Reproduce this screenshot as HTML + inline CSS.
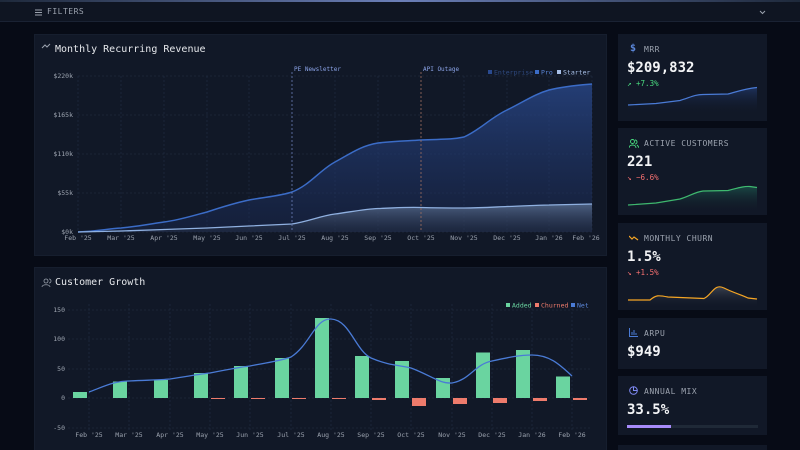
<!DOCTYPE html>
<html><head><meta charset="utf-8"><style>
*{margin:0;padding:0;box-sizing:border-box}
html,body{width:800px;height:450px;overflow:hidden}
body{background:#070b16;font-family:"DejaVu Sans Mono","Liberation Mono",monospace;color:#e5e7eb;position:relative}
.top{position:absolute;left:0;top:0;width:800px;height:2px;background:linear-gradient(90deg,#1e293b,#6b7fb8 50%,#1e293b)}
.bar{position:absolute;left:0;top:2px;width:800px;height:20px;background:#0f1522;border-bottom:1px solid #1a2233}
.bar span{position:absolute;left:47px;top:5px;font-size:8px;color:#9ca3af;letter-spacing:.5px}
.panel{position:absolute;background:#111827;border:1px solid #161e2e}
.card{position:absolute;left:618px;width:149px;background:#111827;overflow:hidden}
.lbl{position:absolute;left:26px;top:11px;font-size:8px;color:#9ca3af;letter-spacing:.5px}
.val{position:absolute;left:9px;font-size:14px;font-weight:bold;color:#f3f4f6}
.chg{position:absolute;left:9px;font-size:7.5px}
svg text{font-family:"DejaVu Sans Mono","Liberation Mono",monospace}
</style></head><body>
<div class="top"></div>
<div class="bar"><svg style="position:absolute;left:35px;top:7px" width="7" height="7"><path d="M0 1h7M0 3.5h7M0 6h7" stroke="#9ca3af" stroke-width="1"/></svg><span>FILTERS</span>
<svg style="position:absolute;left:759px;top:8px" width="7" height="5"><path d="M1 1l2.5 2.5L6 1" stroke="#9ca3af" fill="none"/></svg></div>

<div class="panel" style="left:34px;top:34px;width:573px;height:222px"></div>
<div class="panel" style="left:34px;top:267px;width:573px;height:190px"></div>

<svg style="position:absolute;left:0;top:0" width="800" height="450">
<defs>
<linearGradient id="g1" x1="0" y1="0" x2="0" y2="1"><stop offset="0" stop-color="#2a4a8f" stop-opacity=".75"/><stop offset="1" stop-color="#1a2a55" stop-opacity=".4"/></linearGradient>
<linearGradient id="g2" x1="0" y1="0" x2="0" y2="1"><stop offset="0" stop-color="#5a6f92" stop-opacity=".8"/><stop offset="1" stop-color="#2b3548" stop-opacity=".3"/></linearGradient>
</defs>
<path d="M42 48l3-3 2 2 3-3" stroke="#9ca3af" fill="none" stroke-width="1"/>
<text x="55" y="52" font-size="10" fill="#e5e7eb">Monthly Recurring Revenue</text>
<g stroke="#243047" stroke-width=".6" stroke-dasharray="2 2">
<path d="M78 76H592M78 115H592M78 154H592M78 193H592M78 232H592"/>
<path d="M78 76V232M121 76V232M164 76V232M207 76V232M249 76V232M335 76V232M378 76V232M464 76V232M507 76V232M549 76V232M592 76V232"/>
</g>
<g font-size="6.5" fill="#9ca3af" text-anchor="end"><text x="73" y="78">$220k</text><text x="73" y="117">$165k</text><text x="73" y="156">$110k</text><text x="73" y="195">$55k</text><text x="73" y="234">$0k</text></g>
<g font-size="6.5" fill="#9ca3af" text-anchor="middle"><text x="78" y="240">Feb '25</text><text x="121" y="240">Mar '25</text><text x="164" y="240">Apr '25</text><text x="207" y="240">May '25</text><text x="249" y="240">Jun '25</text><text x="292" y="240">Jul '25</text><text x="335" y="240">Aug '25</text><text x="378" y="240">Sep '25</text><text x="421" y="240">Oct '25</text><text x="464" y="240">Nov '25</text><text x="507" y="240">Dec '25</text><text x="549" y="240">Jan '26</text><text x="586" y="240">Feb '26</text></g>
<path d="M78 232C100 231 105 229 121 228C140 226 150 224 164 222C180 220 195 215 207 212C225 206 235 203 249 200C265 197 280 196 292 192C310 185 320 170 335 162C350 154 360 146 378 143C395 141 405 141 421 140C440 139 450 140 464 137C480 130 490 118 507 110C525 101 535 94 549 90C565 86 580 85 592 84V232Z" fill="url(#g1)"/>
<path d="M78 232C100 231 105 229 121 228C140 226 150 224 164 222C180 220 195 215 207 212C225 206 235 203 249 200C265 197 280 196 292 192C310 185 320 170 335 162C350 154 360 146 378 143C395 141 405 141 421 140C440 139 450 140 464 137C480 130 490 118 507 110C525 101 535 94 549 90C565 86 580 85 592 84" fill="none" stroke="#3b6cc7" stroke-width="1.5"/>
<path d="M78 232L121 231L164 229.5L207 228L249 226L292 224C310 221 320 216 335 214C350 212 365 209 378 208.5C395 208 405 207 421 207.5C440 208 450 208 464 208C480 208 495 207 507 206.5C525 206 540 205 549 205L592 204V232Z" fill="url(#g2)"/>
<path d="M78 232L121 231L164 229.5L207 228L249 226L292 224C310 221 320 216 335 214C350 212 365 209 378 208.5C395 208 405 207 421 207.5C440 208 450 208 464 208C480 208 495 207 507 206.5C525 206 540 205 549 205L592 204" fill="none" stroke="#8fb0e0" stroke-width="1.3"/>
<path d="M292 72V232" stroke="#6b7fb8" stroke-width=".8" stroke-dasharray="2 2"/>
<path d="M421 72V232" stroke="#a07060" stroke-width=".8" stroke-dasharray="2 2"/>
<text x="294" y="71" font-size="6" fill="#8aa2e6">PE Newsletter</text>
<text x="423" y="71" font-size="6" fill="#8aa2e6">API Outage</text>
<rect x="488" y="70" width="4" height="4" fill="#2a4a8f"/><text x="494" y="74.5" font-size="6.5" fill="#2f4a80">Enterprise</text>
<rect x="535" y="70" width="4" height="4" fill="#3b6cc7"/><text x="541" y="74.5" font-size="6.5" fill="#5b86d8">Pro</text>
<rect x="557" y="70" width="4" height="4" fill="#a8c0e8"/><text x="563" y="74.5" font-size="6.5" fill="#a8c0e8">Starter</text>

<circle cx="46" cy="281" r="2" fill="none" stroke="#9ca3af" stroke-width=".8"/><path d="M42 287c0-3 8-3 8 0M49 279a2 2 0 010 4" stroke="#9ca3af" fill="none" stroke-width=".8"/>
<text x="55" y="285" font-size="10" fill="#e5e7eb">Customer Growth</text>
<g stroke="#243047" stroke-width=".6" stroke-dasharray="2 2">
<path d="M68 310H592M68 339H592M68 369H592M68 398H592M68 428H592"/>
<path d="M89 304V430M129 304V430M170 304V430M210 304V430M250 304V430M291 304V430M331 304V430M371 304V430M411 304V430M452 304V430M492 304V430M532 304V430M572 304V430"/>
</g>
<g font-size="6.5" fill="#9ca3af" text-anchor="end"><text x="65" y="312">150</text><text x="65" y="341">100</text><text x="65" y="371">50</text><text x="65" y="400">0</text><text x="65" y="430">-50</text></g>
<g font-size="6.5" fill="#9ca3af" text-anchor="middle"><text x="89" y="437">Feb '25</text><text x="129" y="437">Mar '25</text><text x="170" y="437">Apr '25</text><text x="210" y="437">May '25</text><text x="250" y="437">Jun '25</text><text x="291" y="437">Jul '25</text><text x="331" y="437">Aug '25</text><text x="371" y="437">Sep '25</text><text x="411" y="437">Oct '25</text><text x="452" y="437">Nov '25</text><text x="492" y="437">Dec '25</text><text x="532" y="437">Jan '26</text><text x="572" y="437">Feb '26</text></g>
<g fill="#6ad4a0">
<rect x="73" y="392" width="14" height="6"/><rect x="113" y="381.5" width="14" height="16.5"/><rect x="154" y="380" width="14" height="18"/><rect x="194" y="373" width="14" height="25"/><rect x="234" y="366" width="14" height="32"/><rect x="275" y="358" width="14" height="40"/><rect x="315" y="318" width="14" height="80"/><rect x="355" y="356" width="14" height="42"/><rect x="395" y="361" width="14" height="37"/><rect x="436" y="378" width="14" height="20"/><rect x="476" y="352.5" width="14" height="45.5"/><rect x="516" y="350" width="14" height="48"/><rect x="556" y="376.5" width="14" height="21.5"/>
</g>
<g fill="#ee7b6c">
<rect x="211" y="398" width="14" height="1"/><rect x="251" y="398" width="14" height="1"/><rect x="292" y="398" width="14" height="1"/><rect x="332" y="398" width="14" height="1"/><rect x="372" y="398" width="14" height="2"/><rect x="412" y="398" width="14" height="8"/><rect x="453" y="398" width="14" height="6"/><rect x="493" y="398" width="14" height="5"/><rect x="533" y="398" width="14" height="3"/><rect x="573" y="398" width="14" height="2"/>
</g>
<path d="M89 392C105 386 115 381 129 381C150 380 160 380 170 379C190 376 200 374 210 373C230 369 240 367 250 366C270 362 280 361 291 357C310 345 315 318 331 319C350 320 355 350 371 358C390 366 400 365 411 368C430 375 440 384 452 383C470 380 475 364 492 361C510 357 520 355 532 355C550 355 560 365 572 376" fill="none" stroke="#4a7bd6" stroke-width="1.3"/>
<rect x="506" y="303" width="4" height="4" fill="#6ad4a0"/><text x="512" y="307.5" font-size="6.5" fill="#6ad4a0">Added</text>
<rect x="535" y="303" width="4" height="4" fill="#ee7b6c"/><text x="541" y="307.5" font-size="6.5" fill="#ee7b6c">Churned</text>
<rect x="571" y="303" width="4" height="4" fill="#4a7bd6"/><text x="577" y="307.5" font-size="6.5" fill="#5b86d8">Net</text>
</svg>

<div class="card" style="top:34px;height:87px">
<div style="position:absolute;left:12px;top:9px;font-size:10px;color:#5b86d8;font-weight:bold">$</div>
<div class="lbl">MRR</div><div class="val" style="top:26px">$209,832</div>
<div class="chg" style="top:45px;color:#4ade80">↗ +7.3%</div>
<svg style="position:absolute;left:0;top:0" width="149" height="87"><defs><linearGradient id="gs" x1="0" y1="0" x2="0" y2="1"><stop offset="0" stop-color="#2a4a8f" stop-opacity=".5"/><stop offset="1" stop-color="#111827" stop-opacity="0"/></linearGradient></defs><path d="M10 71L38 69.5L62 66.5C72 63.5 77 60.5 85 60.5L110 60C120 57.5 125 55 139 53.5V80H10Z" fill="url(#gs)"/><path d="M10 71L38 69.5L62 66.5C72 63.5 77 60.5 85 60.5L110 60C120 57.5 125 55 139 53.5" fill="none" stroke="#4a7bd6" stroke-width="1.2"/></svg>
</div>
<div class="card" style="top:128px;height:87px">
<svg style="position:absolute;left:11px;top:11px" width="10" height="9"><circle cx="3.5" cy="2.5" r="2" fill="none" stroke="#4ade80" stroke-width=".9"/><path d="M0 9c0-4 7-4 7 0M6 1a2 2 0 010 4M8 6c1 1 2 2 2 3" stroke="#4ade80" fill="none" stroke-width=".9"/></svg>
<div class="lbl">ACTIVE CUSTOMERS</div><div class="val" style="top:26px">221</div>
<div class="chg" style="top:45px;color:#f87171">↘ −6.6%</div>
<svg style="position:absolute;left:0;top:0" width="149" height="87"><defs><linearGradient id="gg" x1="0" y1="0" x2="0" y2="1"><stop offset="0" stop-color="#34d399" stop-opacity=".25"/><stop offset="1" stop-color="#111827" stop-opacity="0"/></linearGradient></defs><path d="M10 77L38 75L62 71C72 68 77 64 85 63L110 62.5C120 60 126 58 132 58.5L139 59.5V85H10Z" fill="url(#gg)"/><path d="M10 77L38 75L62 71C72 68 77 64 85 63L110 62.5C120 60 126 58 132 58.5L139 59.5" fill="none" stroke="#4ade80" stroke-width="1.2" opacity=".8"/></svg>
</div>
<div class="card" style="top:223px;height:87px">
<svg style="position:absolute;left:11px;top:12px" width="10" height="6"><path d="M0 1l3 3 2-2 4 3" stroke="#f5a524" fill="none" stroke-width="1.2"/></svg>
<div class="lbl">MONTHLY CHURN</div><div class="val" style="top:26px">1.5%</div>
<div class="chg" style="top:45px;color:#f87171">↘ +1.5%</div>
<svg style="position:absolute;left:0;top:0" width="149" height="87"><defs><linearGradient id="go" x1="0" y1="0" x2="0" y2="1"><stop offset="0" stop-color="#9ca3af" stop-opacity=".3"/><stop offset="1" stop-color="#111827" stop-opacity="0"/></linearGradient></defs><path d="M10 77L32 77C38 72 40 72 50 74L86 75.5C94 72 96 60 106 65C116 70 124 72 130 75L139 76V85H10Z" fill="url(#go)"/><path d="M10 77L32 77C38 72 40 72 50 74L86 75.5C94 72 96 60 106 65C116 70 124 72 130 75L139 76" fill="none" stroke="#f5a524" stroke-width="1.2"/></svg>
</div>
<div class="card" style="top:318px;height:51px">
<svg style="position:absolute;left:11px;top:10px" width="9" height="9"><path d="M.5 0v8.5H9M3 7V4M5 7V2M7 7V5" stroke="#4a7bd6" fill="none" stroke-width="1"/></svg>
<div class="lbl">ARPU</div><div class="val" style="top:26px">$949</div>
</div>
<div class="card" style="top:376px;height:59px">
<svg style="position:absolute;left:11px;top:10px" width="9" height="9"><circle cx="4.5" cy="4.5" r="3.8" fill="none" stroke="#818cf8" stroke-width="1"/><path d="M4.5 .7V4.5H8.3" stroke="#818cf8" fill="none"/></svg>
<div class="lbl">ANNUAL MIX</div><div class="val" style="top:26px">33.5%</div>
<div style="position:absolute;left:9px;top:49px;width:131px;height:3px;background:#1f2937"><div style="width:44px;height:3px;background:#a78bfa"></div></div>
</div>
<div class="card" style="top:445px;height:5px"></div>
</body></html>
